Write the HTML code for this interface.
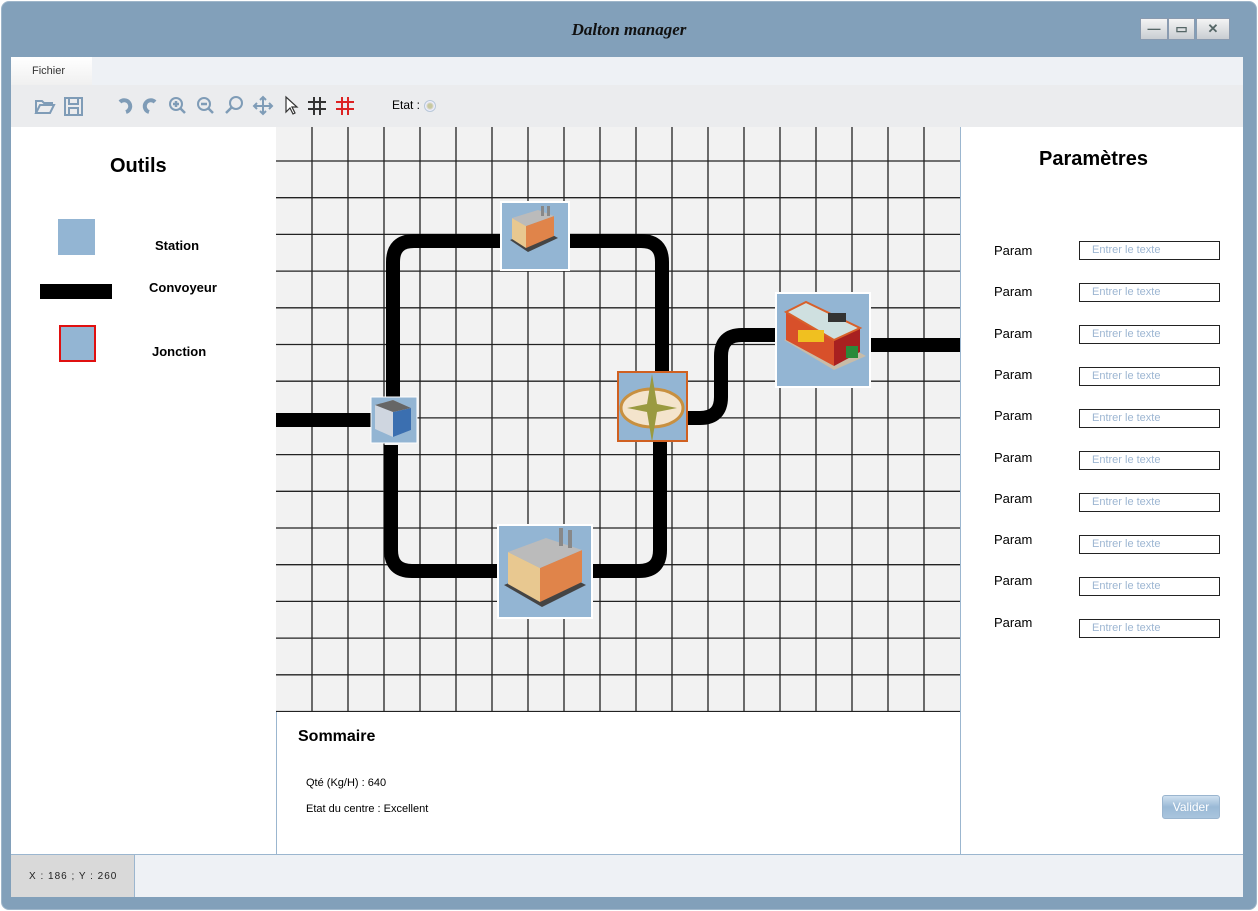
<!DOCTYPE html>
<html><head><meta charset="utf-8">
<style>
*{margin:0;padding:0;box-sizing:border-box}
body{width:1258px;height:911px;background:#fff;position:relative;overflow:hidden;font-family:"Liberation Sans",sans-serif}
.a{position:absolute}
.win{left:1px;top:1px;width:1256px;height:909px;background:#82a0ba;border-radius:8px;border:1px solid #9fb6ca}
.title{left:0;top:20px;width:1258px;text-align:center;font:italic bold 17px "Liberation Serif",serif;color:#111}
.btn{top:18px;height:22px;background:linear-gradient(#f4f4f4,#c9cdd2);border:1px solid #8a9bb0;color:#566;font-size:13px;text-align:center;line-height:20px;font-weight:bold}
.param{font-size:13px;color:#000;left:994px}
.inp{left:1079px;width:141px;height:19px;border:1px solid #222;background:#fff;font-size:11px;color:#9db6d2;padding-left:12px;line-height:17px}
.ic{background:#93b5d3;border:2px solid #fff}
</style></head><body>
<div class="a win"></div>
<div class="a title">Dalton manager</div>
<div class="a btn" style="left:1140px;width:28px">—</div>
<div class="a btn" style="left:1168px;width:27px">▭</div>
<div class="a btn" style="left:1196px;width:34px">✕</div>

<div class="a" style="left:11px;top:57px;width:1232px;height:28px;background:#eef1f5"></div>
<div class="a" style="left:11px;top:57px;width:81px;height:28px;background:linear-gradient(#fff,#f0f0f0);font-size:11px;color:#333;padding:8px 0 0 21px">Fichier</div>
<div class="a" style="left:11px;top:85px;width:1232px;height:42px;background:#ebecee"></div>
<svg class="a" style="left:30px;top:92px" width="330" height="28" viewBox="0 0 330 28">
<g fill="none" stroke="#7f9cb7" stroke-width="2">
<path d="M6 21V9h6l2 2h8v3M6 21l4-8h14l-4 8z"/>
<rect x="35" y="6" width="17" height="17"/><rect x="39" y="6" width="9" height="6"/><rect x="39" y="16" width="9" height="7"/>
<path d="M96 20a6 6 0 1 0-6-10" stroke-width="4"/><path d="M119 20a6 6 0 1 1 6-10" stroke-width="4"/>
<circle cx="146" cy="12" r="6"/><path d="M150 16l5 5M143 12h6M146 9v6" stroke-width="2.5"/>
<circle cx="174" cy="12" r="6"/><path d="M178 16l5 5M171 12h6" stroke-width="2.5"/>
<circle cx="206" cy="11" r="6"/><path d="M202 15l-6 6" stroke-width="2.5"/>
<path d="M233 5v17M224 14h18M230 8l3-3 3 3M230 19l3 3 3-3M227 11l-3 3 3 3M239 11l3 3-3 3"/>
</g>
<path d="M256 5v15l4-4 3 6 2-1-3-6h5z" fill="#fff" stroke="#333" stroke-width="1.2"/>
<g stroke="#333" stroke-width="2"><path d="M284 5v18M290 5v18M278 10h18M278 17h18"/></g>
<g stroke="#d22" stroke-width="2"><path d="M312 5v18M318 5v18M306 10h18M306 17h18"/></g>
</svg>
<div class="a" style="left:392px;top:98px;font-size:12px">Etat :</div>
<div class="a" style="left:424px;top:100px;width:12px;height:12px;border-radius:50%;background:radial-gradient(#c8c8a0 30%,#eef 60%);border:1px solid #b8c8d8"></div>

<!-- left panel -->
<div class="a" style="left:11px;top:127px;width:265px;height:727px;background:#fff"></div>
<div class="a" style="left:110px;top:155px;font-size:20px;font-weight:bold">Outils</div>
<div class="a" style="left:58px;top:219px;width:37px;height:36px;background:#93b5d3"></div>
<div class="a" style="left:155px;top:238px;font-size:13px;font-weight:bold">Station</div>
<div class="a" style="left:40px;top:284px;width:72px;height:15px;background:#000"></div>
<div class="a" style="left:149px;top:280px;font-size:13px;font-weight:bold">Convoyeur</div>
<div class="a" style="left:59px;top:325px;width:37px;height:37px;background:#93b5d3;border:2px solid #e01010"></div>
<div class="a" style="left:152px;top:344px;font-size:13px;font-weight:bold">Jonction</div>

<!-- canvas -->
<svg class="a" style="left:276px;top:127px;background:#f2f2f2" width="684" height="585">
<g stroke="#222" stroke-width="1.3">
<path d="M36 0V585M72 0V585M108 0V585M144 0V585M180 0V585M216 0V585M252 0V585M288 0V585M324 0V585M360 0V585M396 0V585M432 0V585M468 0V585M504 0V585M540 0V585M576 0V585M612 0V585M648 0V585"/>
<path d="M0 34H684M0 70.7H684M0 107.4H684M0 144.1H684M0 180.8H684M0 217.5H684M0 254.2H684M0 290.9H684M0 327.6H684M0 364.3H684M0 401H684M0 437.7H684M0 474.4H684M0 511.1H684M0 547.8H684M0 584.5H684"/>
</g>
<g transform="translate(-276,-127)" fill="none" stroke="#000" stroke-width="14">
<path d="M276 420H372"/>
<path d="M393 400V262Q393 241 414 241H502"/>
<path d="M569 241H641Q662 241 662 262V372"/>
<path d="M391 445V550Q391 571 412 571H499"/>
<path d="M592 571H639Q660 571 660 550V441"/>
<path d="M687 418H700Q721 418 721 397V356Q721 335 742 335H777"/>
<path d="M870 345H960"/>
</g>
<g transform="translate(-276,-127)">
<!-- top factory -->
<rect x="501" y="202" width="68" height="68" fill="#93b5d3" stroke="#fff" stroke-width="2"/>
<path d="M510 240l18 12 30-14-18-10z" fill="#444"/>
<path d="M512 218l14 8v22l-14-9z" fill="#e8c890"/><path d="M526 226l28-10v20l-28 12z" fill="#e0844a"/>
<path d="M512 218l26-8 16 6-28 10z" fill="#bbb"/>
<rect x="541" y="206" width="3" height="10" fill="#888"/><rect x="547" y="206" width="3" height="10" fill="#888"/>
<!-- small building -->
<rect x="371" y="397" width="46" height="46" fill="#93b5d3" stroke="#fff" stroke-width="1"/>
<path d="M375 405l18-5 18 8v22l-18 7-18-8z" fill="#cfd6e0"/><path d="M393 412l18-4v22l-18 7z" fill="#3b6fb0"/><path d="M375 405l18-5 18 8-18 4z" fill="#666"/>
<!-- compass -->
<rect x="618" y="372" width="69" height="69" fill="#93b5d3" stroke="#d06020" stroke-width="2"/>
<ellipse cx="652" cy="408" rx="31" ry="19" fill="#f4e4cc" stroke="#c89040" stroke-width="3"/>
<path d="M652 374l5 30 20 4-20 4-5 30-5-30-20-4 20-4z" fill="#9a9a40"/>
<!-- bottom factory -->
<rect x="498" y="525" width="94" height="93" fill="#93b5d3" stroke="#fff" stroke-width="2"/>
<path d="M504 585l38 22 44-22-36-18z" fill="#444"/>
<path d="M508 552l32 16v34l-32-18z" fill="#e8c890"/><path d="M540 568l42-18v32l-42 20z" fill="#e0844a"/>
<path d="M508 552l38-14 36 12-42 18z" fill="#bbb"/>
<rect x="559" y="528" width="4" height="18" fill="#888"/><rect x="568" y="530" width="4" height="18" fill="#888"/>
<!-- store -->
<rect x="776" y="293" width="94" height="94" fill="#93b5d3" stroke="#fff" stroke-width="2"/>
<path d="M784 340l50 30 32-14-48-26z" fill="#c8bca8"/>
<path d="M786 312l48 28v26l-48-26z" fill="#d8502a"/><path d="M834 340l26-12v24l-26 14z" fill="#a82020"/>
<path d="M786 312l20-10 54 26-26 12z" fill="#cfe0e0" stroke="#d8602a" stroke-width="2"/>
<rect x="798" y="330" width="26" height="12" fill="#f0c020"/><rect x="846" y="346" width="12" height="12" fill="#2a8a3a"/>
<rect x="828" y="313" width="18" height="9" fill="#333"/>
</g>
</svg>

<!-- summary -->
<div class="a" style="left:276px;top:712px;width:684px;height:142px;background:#fff;border-left:1px solid #9bb6cf"></div>
<div class="a" style="left:298px;top:728px;font-size:16px;font-weight:bold">Sommaire</div>
<div class="a" style="left:306px;top:777px;font-size:11px">Qté (Kg/H) : 640</div>
<div class="a" style="left:306px;top:803px;font-size:11px">Etat du centre : Excellent</div>

<!-- right panel -->
<div class="a" style="left:960px;top:127px;width:283px;height:727px;background:#fff;border-left:1px solid #9bb6cf"></div>
<div class="a" style="left:1039px;top:148px;font-size:20px;font-weight:bold">Paramètres</div>
<div class="a param" style="top:243px">Param</div><div class="a inp" style="top:241px">Entrer le texte</div>
<div class="a param" style="top:284px">Param</div><div class="a inp" style="top:283px">Entrer le texte</div>
<div class="a param" style="top:326px">Param</div><div class="a inp" style="top:325px">Entrer le texte</div>
<div class="a param" style="top:367px">Param</div><div class="a inp" style="top:367px">Entrer le texte</div>
<div class="a param" style="top:408px">Param</div><div class="a inp" style="top:409px">Entrer le texte</div>
<div class="a param" style="top:450px">Param</div><div class="a inp" style="top:451px">Entrer le texte</div>
<div class="a param" style="top:491px">Param</div><div class="a inp" style="top:493px">Entrer le texte</div>
<div class="a param" style="top:532px">Param</div><div class="a inp" style="top:535px">Entrer le texte</div>
<div class="a param" style="top:573px">Param</div><div class="a inp" style="top:577px">Entrer le texte</div>
<div class="a param" style="top:615px">Param</div><div class="a inp" style="top:619px">Entrer le texte</div>
<div class="a" style="left:1162px;top:795px;width:58px;height:24px;border-radius:3px;background:linear-gradient(#cfe0ef,#9ab9d6 50%,#a9c4dd);border:1px solid #9ab5cf;color:#fff;font-size:12px;text-align:center;line-height:22px">Valider</div>

<!-- status -->
<div class="a" style="left:11px;top:854px;width:1232px;height:43px;background:#eef1f5;border-top:1px solid #9bb6cf"></div>
<div class="a" style="left:11px;top:855px;width:124px;height:42px;background:#d9d9d9;border-right:1px solid #9bb6cf;font-size:10px;letter-spacing:1px;color:#222;padding:16px 0 0 18px">X : 186 ; Y : 260</div>
</body></html>
